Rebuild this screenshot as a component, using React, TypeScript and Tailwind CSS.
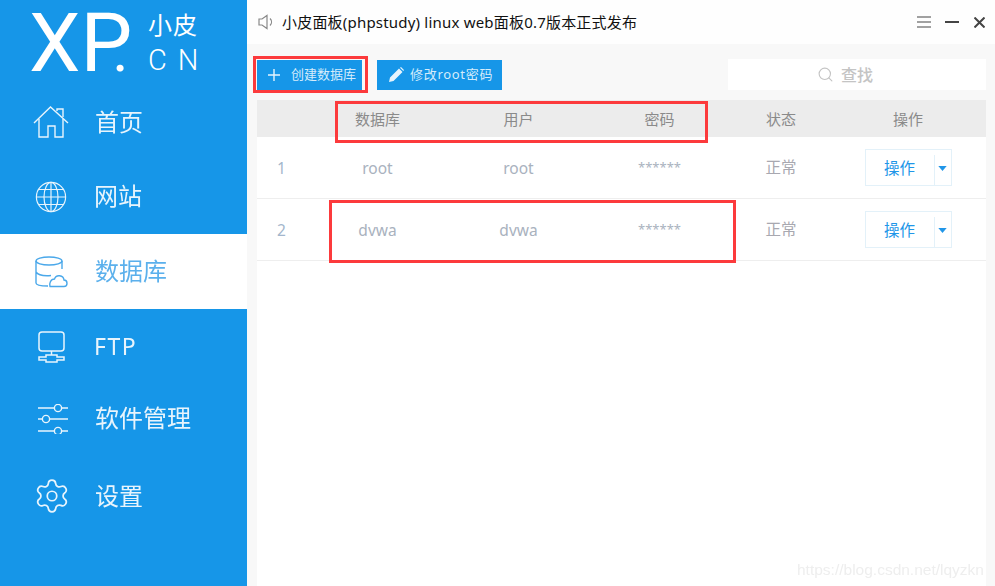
import React from "react";
import { Settings, Search } from "lucide-react";

const font = { fontFamily: '"Noto Sans","Noto Sans CJK SC",sans-serif' };

function Home() {
  return (
    <svg width="36" height="32" viewBox="0 0 36 32" fill="none" stroke="currentColor" strokeWidth="1.4" className="opacity-90">
      <path d="M1 17 L17.5 1 L35 17" />
      <path d="M6 13 V31 H15 V20 H22 V31 H30 V13" />
      <path d="M24 5 L24 3 L30 3 L30 11" />
    </svg>
  );
}
function Globe() {
  return (
    <svg width="32" height="32" viewBox="0 0 32 32" fill="none" stroke="currentColor" strokeWidth="1.2" className="opacity-90">
      <circle cx="16" cy="16" r="14.6" />
      <ellipse cx="16" cy="16" rx="7" ry="14.6" />
      <path d="M16 1.4 V30.6 M1.4 16 H30.6 M4 8.5 H28 M4 23.5 H28" />
    </svg>
  );
}
function Db() {
  return (
    <svg width="33" height="32" viewBox="0 0 33 32" fill="none" stroke="#4aa8ea" strokeWidth="1.4">
      <ellipse cx="14" cy="5" rx="13" ry="4" />
      <path d="M1 5 V27 C1 29 5 30 13 30 M27 5 V13 M1 16 C3 19 10 20 16 19.5" />
      <path d="M15 30.5 H29 C33 30.5 33 24 29 24 C28.5 19 21 18 19.5 23 C15.5 23 14 28 15 30.5 Z" />
    </svg>
  );
}
function Ftp() {
  return (
    <svg width="28" height="32" viewBox="0 0 28 32" fill="none" stroke="currentColor" strokeWidth="1.5" className="opacity-90 translate-x-[1px]">
      <rect x="1" y="1" width="25" height="19" rx="3" />
      <path d="M13.5 20 V24" />
      <path d="M8 24 H19 V26 H26 V29 H19 V31 H8 V29 H1 V26 H8 Z" />
    </svg>
  );
}
function Sliders() {
  return (
    <svg width="32" height="30" viewBox="0 0 32 30" fill="none" stroke="currentColor" strokeWidth="1.4" className="opacity-90 translate-x-[2px]">
      <path d="M1 4 H17 M25 4 H31 M1 15 H5 M13 15 H31 M1 27 H17 M25 27 H31" />
      <circle cx="21" cy="4" r="3.6" />
      <circle cx="9" cy="15" r="3.6" />
      <circle cx="21" cy="27" r="3.6" />
    </svg>
  );
}

const items: { label: string; icon: React.ReactNode; h: string; active?: boolean; text: string }[] = [
  { label: "首页", icon: <Home />, h: "h-[75px]", text: "text-[24px]" },
  { label: "网站", icon: <Globe />, h: "h-[75px]", text: "text-[24px] -translate-y-[1px] -translate-x-[1px]" },
  { label: "数据库", icon: <Db />, h: "h-[75px]", active: true, text: "text-[24px] -translate-y-[1px]" },
  { label: "FTP", icon: <Ftp />, h: "h-[75px]", text: "text-[23px] tracking-[1.5px] -translate-x-[1px]" },
  { label: "软件管理", icon: <Sliders />, h: "h-[70px]", text: "text-[24px] -translate-y-[1px]" },
  { label: "设置", icon: <Settings size={38} strokeWidth={1.1} className="opacity-90 translate-x-[1px]" />, h: "h-[84px]", text: "text-[24px]" },
];

const cols = "grid grid-cols-[50px_141px_141px_141px_102px_154px] items-center text-center";

function Row({ n, name }: { n: string; name: string }) {
  return (
    <div className={`${cols} h-[62px] border-b border-[#eeeeee] text-[15.5px] text-[#a9b2be]`}>
      <div className="translate-y-[1px] pl-[20px] text-left text-[#a3b6cc]">{n}</div>
      <div className="translate-y-[1px]">{name}</div>
      <div className="translate-y-[1px]">{name}</div>
      <div className="text-[13px]">******</div>
      <div className="text-[#a8a8b0]">正常</div>
      <div className="flex justify-center pr-[2px]">
        <div className="flex h-[37px] w-[87px] border border-[#e3f1f9] text-[#2196e8]">
          <div className="flex w-[68px] items-center justify-center pt-[2px] text-[15.5px]">操作</div>
          <div className="mt-[5px] flex flex-1 items-center justify-center border-l border-[#e3f1f9] pb-[4px]">
            <svg width="9" height="5" viewBox="0 0 10 6"><path d="M0 0 H10 L5 6 Z" fill="#2196e8" /></svg>
          </div>
        </div>
      </div>
    </div>
  );
}

export default function App() {
  return (
    <div className="relative flex h-[586px] w-[995px] overflow-hidden bg-[#f8f8f8]" style={font}>
      <aside className="flex w-[247px] shrink-0 flex-col bg-[#1696e8] text-white">
        <div className="flex h-[84px] pl-[29px]">
          <div className="h-[84px] w-[119px] shrink-0 pt-[1px] text-[82px] leading-[84px] whitespace-nowrap" style={{ fontFamily: "Roboto,sans-serif" }}>
            X<span className="tracking-[-20px]">P</span><span className="text-[62px]">.</span>
          </div>
          <div className="flex flex-col pt-[10px]">
            <div className="text-[24px] leading-[30px] tracking-[1px]">小皮</div>
            <div className="mt-[3px] text-[29px] leading-[34px] font-light tracking-[11px]" style={{ fontFamily: "Roboto,sans-serif" }}>CN</div>
          </div>
        </div>
        {items.map((it) => (
          <div key={it.label} className={`flex ${it.h} items-center ${it.active ? "bg-white text-[#4aa8ea]" : "text-white"}`}>
            <div className="ml-[18px] flex w-[66px] shrink-0 justify-center">{it.icon}</div>
            <span className={`ml-[11px] ${it.text} opacity-90`}>{it.label}</span>
          </div>
        ))}
      </aside>
      <main className="flex min-w-0 flex-1 flex-col">
        <header className="flex h-[44px] items-center bg-[#fefefe] pl-[11px] text-[#111]">
          <svg width="16" height="16" viewBox="0 0 16 16" fill="none" stroke="#888" strokeWidth="1.2">
            <path d="M1 5 H4 L9 1.5 V14.5 L4 11 H1 Z" />
            <path d="M12 4.5 C14 6.5 14 9.5 12 11.5" />
          </svg>
          <span className="ml-[8px] text-[15px] tracking-[0.2px]">小皮面板(phpstudy) linux web面板0.7版本正式发布</span>
          <div className="ml-auto flex items-center gap-[14px] pr-[10px]">
            <svg width="14" height="12" viewBox="0 0 14 12" stroke="#444" strokeWidth="1"><path d="M0 1 H14 M0 6 H14 M0 11 H14" /></svg>
            <div className="h-[2px] w-[14px] bg-[#444]" />
            <svg width="11" height="11" viewBox="0 0 11 11" stroke="#444" strokeWidth="2" className="ml-[1px]"><path d="M0.5 0.5 L10.5 10.5 M10.5 0.5 L0.5 10.5" /></svg>
          </div>
        </header>
        <div className="flex flex-1 flex-col pr-[9px] pl-[10px]">
          <div className="mt-[15px] flex h-[31px] items-center">
            <button className="flex h-[30px] w-[105px] items-center bg-[#1696e8] pl-[11px] text-[13px] text-[#d5ecfb]">
              <svg width="12" height="12" viewBox="0 0 12 12" stroke="#e6f4fd" strokeWidth="1.4"><path d="M6 0 V12 M0 6 H12" /></svg>
              <span className="ml-[11px] pt-[1px]">创建数据库</span>
            </button>
            <button className="ml-[15px] flex h-[30px] w-[125px] items-center bg-[#1696e8] pl-[12px] text-[13px] tracking-[0.7px] text-[#d5ecfb]">
              <svg width="15" height="15" viewBox="0 0 15 15" fill="#e6f4fd"><path d="M0 15 L1 10.5 L10 1.5 L13.5 5 L4.5 14 Z M11 .7 L12 0 L15 3 L14.3 4 Z" /></svg>
              <span className="ml-[6px] pt-[1px]">修改root密码</span>
            </button>
            <div className="ml-auto flex h-[31px] w-[258px] items-center justify-center bg-white pr-[24px] text-[16px] text-[#c4c4c4]">
              <Search size={17} strokeWidth={1.6} className="mr-[7px]" />
              <span className="font-medium">查找</span>
            </div>
          </div>
          <div className="mt-[10px] flex flex-1 flex-col bg-white">
            <div className={`${cols} h-[37px] bg-[#ececec] pt-[2px] text-[15px] text-[#8a8a8a]`}>
              <div />
              <div>数据库</div>
              <div>用户</div>
              <div>密码</div>
              <div>状态</div>
              <div className="pr-[2px]">操作</div>
            </div>
            <Row n="1" name="root" />
            <Row n="2" name="dvwa" />
          </div>
        </div>
      </main>
      <div className="absolute top-[56px] left-[253px] h-[37px] w-[115px] border-[3px] border-[#fc3a3c]" />
      <div className="absolute top-[101px] left-[335px] h-[42px] w-[373px] border-[3px] border-[#fc3a3c]" />
      <div className="absolute top-[200px] left-[329px] h-[63px] w-[407px] border-[3px] border-[#fc3a3c]" />
      <div className="absolute top-[558px] left-[797px] text-[15.5px] text-[#eeeeee] blur-[0.4px]" style={{ fontFamily: '"Liberation Sans",sans-serif' }}>https://blog.csdn.net/lqyzkn</div>
    </div>
  );
}
